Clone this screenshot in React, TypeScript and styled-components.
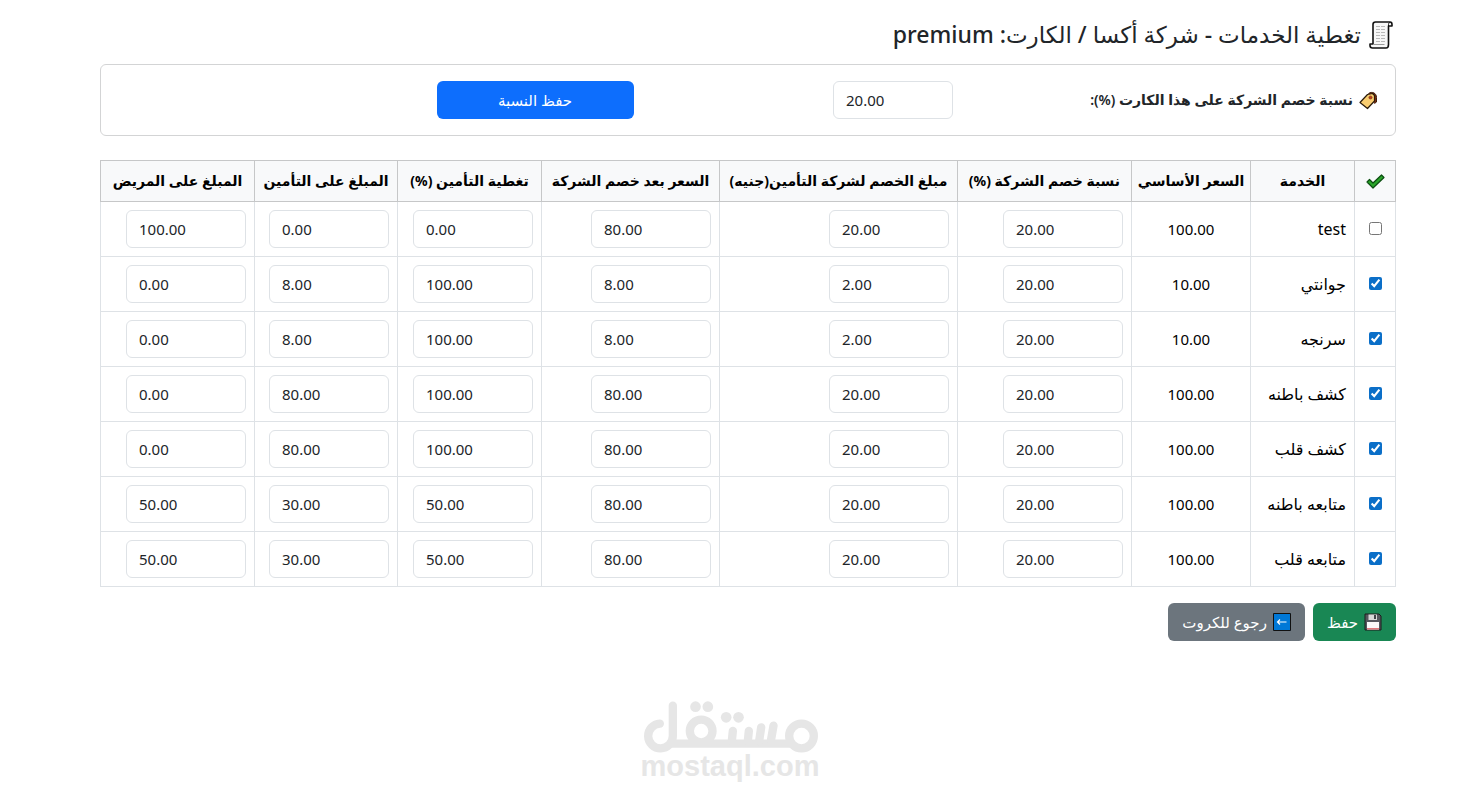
import React, { useState } from 'react';
import styled, { createGlobalStyle, css } from 'styled-components';

const GlobalStyle = createGlobalStyle`
  *, *::before, *::after { box-sizing: border-box; }
  body {
    margin: 0;
    background: #fff;
    color: #212529;
    font-family: 'Noto Sans', 'DejaVu Sans', sans-serif;
    font-size: 15px;
    line-height: 24px;
  }
`;

const Page = styled.main`
  padding: 20px 65px 16px 100px;
`;

const Title = styled.h1`
  display: flex;
  align-items: center;
  gap: 8px;
  margin: 0 0 15px;
  padding-inline-start: 3px;
  font-size: 23px;
  font-weight: 500;
  line-height: 29px;
`;

const DiscountCard = styled.form`
  display: grid;
  grid-template-columns: repeat(12, 1fr);
  align-items: center;
  gap: 16px;
  margin-bottom: 24px;
  padding: 16px;
  border: 1px solid #d3d4d5;
  border-radius: 6px;
`;

const DiscountLabel = styled.label`
  grid-column: span 4;
  display: flex;
  align-items: center;
  gap: 6px;
  padding-inline-start: 2px;
  font-size: 14px;
  font-weight: 600;
`;

const DiscountField = styled.div`
  grid-column: span 3;
  display: flex;
`;

const NumberInput = styled.input`
  display: block;
  width: 120px;
  height: 38px;
  padding: 6px 12px;
  border: 1px solid #dee2e6;
  border-radius: 6px;
  background: #fff;
  color: #212529;
  font: inherit;
  direction: ltr;
  text-align: left;
`;

type Tone = 'primary' | 'success' | 'secondary';
const tones: Record<Tone, string> = {
  primary: '#0d6efd',
  success: '#198754',
  secondary: '#6c757d',
};

const buttonLook = css<{ $tone: Tone }>`
  display: inline-flex;
  align-items: center;
  justify-content: center;
  gap: 6px;
  height: 38px;
  padding: 0 14px;
  border: 0;
  border-radius: 6px;
  background: ${({ $tone }) => tones[$tone]};
  color: #fff;
  font: inherit;
  text-decoration: none;
  cursor: pointer;
`;

const Button = styled.button<{ $tone: Tone }>`
  ${buttonLook}
`;

const ButtonLink = styled.a<{ $tone: Tone }>`
  ${buttonLook}
`;

const SaveRateButton = styled(Button)`
  grid-column: span 2;
`;

const Table = styled.table`
  width: 100%;
  margin-bottom: 16px;
  table-layout: fixed;
  border-collapse: collapse;
  color: #000;
`;

const Column = styled.col<{ $width: number }>`
  width: ${({ $width }) => $width}px;
`;

const HeadCell = styled.th`
  height: 41px;
  padding: 8px 0;
  border: 1px solid #c6c7c8;
  background: #f8f9fa;
  font-weight: 700;
  font-size: 14px;
  text-align: center;
  white-space: nowrap;

  svg {
    display: block;
    margin: 0 auto;
  }
`;

const Cell = styled.td<{ $align?: 'center' | 'start' }>`
  height: 55px;
  padding: 8px;
  border: 1px solid #dee2e6;
  text-align: ${({ $align }) => $align ?? 'start'};
  vertical-align: middle;
  white-space: nowrap;
`;

const NameCell = styled(Cell)`
  font-size: 16px;
`;

const Check = styled.input`
  display: block;
  width: 13px;
  height: 13px;
  margin: 0 auto 2px;
  accent-color: #0b6fc8;
`;

const Actions = styled.div`
  display: flex;
  gap: 8px;
`;

const Brand = styled.footer`
  display: flex;
  flex-direction: column;
  align-items: center;
  margin-top: 60px;
  margin-left: -36px;
  color: #e6e6e6;
  font: 700 29px/26px 'Liberation Sans', sans-serif;
`;

const ScrollIcon = () => (
  <svg width="24" height="28" viewBox="0 0 24 28" aria-hidden="true">
    <path d="M4 3.500c0-1.500 1-2.500 2.500-2.500H21c1.500 0 2 1 2 2.500V5h-3.500v18.500c0 2-1 3.500-2.500 3.500H3.500C2 27 1 26 1 24.500V23h3z" fill="#f7f7f7" stroke="#111" strokeWidth="1.600" strokeLinejoin="round" />
    <path d="M19.500 5V3.500c0-1 .5-2 1.500-2" fill="none" stroke="#111" />
    <path d="M7 5.500h9.500M7 8.500h9.500M7 11.500h9.500M7 14.500h9.500M7 17.500h9.500M7 20.500h9.500" stroke="#b9b9b9" strokeDasharray="4 1" />
    <path d="M4 23.500h11.500" stroke="#999" />
  </svg>
);

const TagIcon = () => (
  <svg width="18" height="19" viewBox="0 0 18 19" aria-hidden="true">
    <path d="M9.500 2.500C13 0 17.500 2 17.500 6.500V11l-2 1.500" fill="#7a2c10" stroke="#3b1a0a" />
    <path d="M8.500 3.500 13.500 2.500l2 2v5.500l-7 7.500-7.500-6z" fill="#f9cd70" stroke="#2a1a0a" strokeWidth="1.200" strokeLinejoin="round" />
    <circle cx="11.500" cy="6.500" r="1.600" fill="#c43c1c" stroke="#5b2a10" strokeWidth=".5" />
  </svg>
);

const TickIcon = () => (
  <svg width="19" height="15" viewBox="0 0 19 15" role="img" aria-label="تفعيل">
    <path d="M1 8 3.500 5.500 7 9 15.500 1 18 3.500 7 14z" fill="#2aa52a" stroke="#0b4d10" strokeWidth="1.200" strokeLinejoin="round" />
  </svg>
);

const FloppyIcon = () => (
  <svg width="18" height="18" viewBox="0 0 18 18" aria-hidden="true">
    <path d="M1 1h14l2 2v14H1z" fill="#55585e" stroke="#1c1c1c" />
    <path d="M4.500 1.500H13V7H4.500z" fill="#d8d8d8" />
    <path d="M10 2h2v4h-2z" fill="#404247" />
    <path d="M3 9h12v7.500H3z" fill="#fafafa" />
    <path d="M3 15h12v1.500H3z" fill="#e0787c" />
  </svg>
);

const BackIcon = () => (
  <svg width="18" height="18" viewBox="0 0 18 18" aria-hidden="true">
    <path d="M.5.5h17v17H.5z" fill="#0078d7" stroke="#111" />
    <path d="M13.500 9h-9M7 6.500 4.500 9 7 11.500" fill="none" stroke="#fff" strokeWidth="1.200" />
  </svg>
);

const BrandMark = () => (
  <svg width="177" height="52" viewBox="67 32 528 156" role="img" aria-label="مستقل">
    <g fill="none" stroke="currentColor" strokeWidth="25" strokeLinecap="round">
      <path d="M119 100a37 37 0 1 0 39 37V46" />
      <path d="M150 160H510" strokeLinecap="butt" />
      <circle cx="243" cy="122" r="34" />
      <circle cx="544" cy="137" r="37" />
      <path d="M338 122 335 152M386 122 383 152M423 111 417 152M460 106 452 152" />
    </g>
    <g fill="currentColor">
      <circle cx="226" cy="49" r="16" />
      <circle cx="263" cy="49" r="16" />
      <circle cx="318" cy="81" r="16" />
      <circle cx="355" cy="81" r="16" />
    </g>
  </svg>
);

const columns = [
  { title: 'الخدمة', width: 104 },
  { title: 'السعر الأساسي', width: 119 },
  { title: 'نسبة خصم الشركة (%)', width: 174 },
  { title: 'مبلغ الخصم لشركة التأمين(جنيه)', width: 238 },
  { title: 'السعر بعد خصم الشركة', width: 178 },
  { title: 'تغطية التأمين (%)', width: 144 },
  { title: 'المبلغ على التأمين', width: 143 },
  { title: 'المبلغ على المريض', width: 154 },
];

interface Service {
  name: string;
  active: boolean;
  price: string;
  values: string[];
}

const services: Service[] = [
  { name: 'test', active: false, price: '100.00', values: ['20.00', '20.00', '80.00', '0.00', '0.00', '100.00'] },
  { name: 'جوانتي', active: true, price: '10.00', values: ['20.00', '2.00', '8.00', '100.00', '8.00', '0.00'] },
  { name: 'سرنجه', active: true, price: '10.00', values: ['20.00', '2.00', '8.00', '100.00', '8.00', '0.00'] },
  { name: 'كشف باطنه', active: true, price: '100.00', values: ['20.00', '20.00', '80.00', '100.00', '80.00', '0.00'] },
  { name: 'كشف قلب', active: true, price: '100.00', values: ['20.00', '20.00', '80.00', '100.00', '80.00', '0.00'] },
  { name: 'متابعه باطنه', active: true, price: '100.00', values: ['20.00', '20.00', '80.00', '50.00', '30.00', '50.00'] },
  { name: 'متابعه قلب', active: true, price: '100.00', values: ['20.00', '20.00', '80.00', '50.00', '30.00', '50.00'] },
];

const ServiceRow = ({ service }: { service: Service }) => {
  const [active, setActive] = useState(service.active);
  return (
    <tr>
      <Cell $align="center">
        <Check type="checkbox" aria-label={service.name} checked={active} onChange={(e) => setActive(e.target.checked)} />
      </Cell>
      <NameCell>{service.name}</NameCell>
      <Cell $align="center">{service.price}</Cell>
      {service.values.map((value, i) => (
        <Cell key={columns[i + 2].title}>
          <NumberInput inputMode="decimal" defaultValue={value} aria-label={`${columns[i + 2].title} ${service.name}`} />
        </Cell>
      ))}
    </tr>
  );
};

export default function App() {
  return (
    <>
      <GlobalStyle />
      <Page dir="rtl" lang="ar">
        <Title>
          <ScrollIcon />
          <span>تغطية الخدمات - شركة أكسا / الكارت: premium</span>
        </Title>
        <DiscountCard onSubmit={(e) => e.preventDefault()}>
          <DiscountLabel htmlFor="discount">
            <TagIcon />
            <span>نسبة خصم الشركة على هذا الكارت (%):</span>
          </DiscountLabel>
          <DiscountField>
            <NumberInput id="discount" inputMode="decimal" defaultValue="20.00" />
          </DiscountField>
          <SaveRateButton $tone="primary" type="submit">حفظ النسبة</SaveRateButton>
        </DiscountCard>
        <Table>
          <colgroup>
            <Column $width={41} />
            {columns.map((c) => <Column key={c.title} $width={c.width} />)}
          </colgroup>
          <thead>
            <tr>
              <HeadCell scope="col"><TickIcon /></HeadCell>
              {columns.map((c) => <HeadCell key={c.title} scope="col">{c.title}</HeadCell>)}
            </tr>
          </thead>
          <tbody>
            {services.map((s) => <ServiceRow key={s.name} service={s} />)}
          </tbody>
        </Table>
        <Actions>
          <Button $tone="success" type="button"><FloppyIcon />حفظ</Button>
          <ButtonLink $tone="secondary" href="#cards"><BackIcon />رجوع للكروت</ButtonLink>
        </Actions>
        <Brand dir="ltr">
          <BrandMark />
          <span>mostaql.com</span>
        </Brand>
      </Page>
    </>
  );
}
